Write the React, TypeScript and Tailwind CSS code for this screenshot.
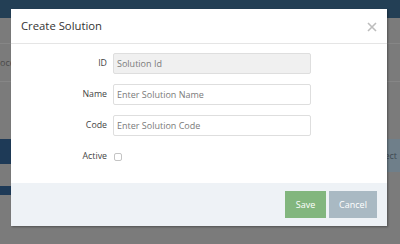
import React from "react";

export default function App() {
  const font = { fontFamily: '"Open Sans", "Liberation Sans", sans-serif' };
  return (
    <div className="relative w-[400px] h-[244px] overflow-hidden bg-[#7b7b7b]" style={font}>
      {/* background page (dimmed) */}
      <div className="flex flex-col w-full">
        <div className="h-[18px] bg-[#233f55]" />
        <div className="h-[25px]" />
        <div className="h-px bg-[#868686]" />
        <div className="h-[37px] flex items-center">
          <span className="text-[9px] text-[#4a4a4a]">oce</span>
        </div>
        <div className="h-px bg-[#868686]" />
        <div className="h-[57px]" />
        <div className="flex justify-between items-start h-[47px]">
          <div className="w-[20px] h-[25px] bg-[#1e3a57]" />
          <div className="h-[33px] w-[60px] bg-[#6f7f8a] flex items-center justify-end pr-[3px]">
            <span className="text-[9px] text-[#3f4a52]">Select</span>
          </div>
        </div>
        <div className="w-[20px] h-[9px] bg-[#1e3a57]" />
      </div>

      {/* modal */}
      <div className="absolute left-[11px] top-[9px] w-[376px] h-[217px] bg-white flex flex-col shadow-[1px_1px_2px_rgba(0,0,0,0.35)]">
        <div className="h-[35px] border-b border-[#e5e5e5] flex items-center justify-between pl-[10px] pr-[10px]">
          <span className="text-[11.3px] text-[#333]">Create Solution</span>
          <svg width="10" height="10" viewBox="0 0 10 10" className="mt-[1px]">
            <path d="M1 1L9 9M9 1L1 9" stroke="#bdbdbd" strokeWidth="1.6" />
          </svg>
        </div>
        <div className="flex-1 flex flex-col pt-[9px] gap-[10px]">
          <div className="flex items-center">
            <span className="w-[96px] text-right text-[8.8px] text-[#444]">ID</span>
            <div className="ml-[6px] w-[198px] h-[21px] bg-[#f0f0f0] border border-[#dedede] rounded-[2px] flex items-center pl-[3px]">
              <span className="text-[9px] text-[#7a7a7a]">Solution Id</span>
            </div>
          </div>
          <div className="flex items-center">
            <span className="w-[96px] text-right text-[8.8px] text-[#444]">Name</span>
            <div className="ml-[6px] w-[198px] h-[21px] bg-white border border-[#dedede] rounded-[2px] flex items-center pl-[3px]">
              <span className="text-[9px] text-[#7a7a7a]">Enter Solution Name</span>
            </div>
          </div>
          <div className="flex items-center">
            <span className="w-[96px] text-right text-[8.8px] text-[#444]">Code</span>
            <div className="ml-[6px] w-[198px] h-[21px] bg-white border border-[#dedede] rounded-[2px] flex items-center pl-[3px]">
              <span className="text-[9px] text-[#7a7a7a]">Enter Solution Code</span>
            </div>
          </div>
          <div className="flex items-center mt-[4px]">
            <span className="w-[96px] text-right text-[8.8px] text-[#444]">Active</span>
            <div className="ml-[7px] w-[8px] h-[8px] border border-[#c4c4c4] rounded-[2px] bg-white" />
          </div>
        </div>
        <div className="h-[43px] bg-[#eef2f6] flex items-center justify-end gap-[3px] pr-[10px]">
          <div className="w-[41px] h-[27px] bg-[#82b67e] flex items-center justify-center text-white text-[9px]">Save</div>
          <div className="w-[48px] h-[27px] bg-[#a9b9c3] flex items-center justify-center text-white text-[9px]">Cancel</div>
        </div>
      </div>
    </div>
  );
}
